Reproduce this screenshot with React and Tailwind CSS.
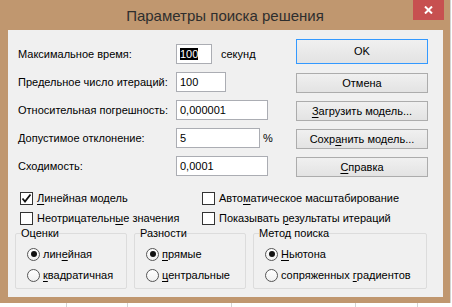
const FONT = "font-['Liberation_Sans',Arial,sans-serif]"

function TextBox({ width, value, selected }) {
  return (
    <div className={`h-[20px] bg-white border border-[#abadb3] flex items-center pl-[3px] ${width}`}>
      {selected ? (
        <span className="bg-black text-white leading-[12px] h-[12px]">{value}</span>
      ) : (
        <span>{value}</span>
      )}
    </div>
  )
}

function Row({ label, children }) {
  return (
    <div className="h-[20px] grid grid-cols-[158px_auto] items-center">
      <span>{label}</span>
      <div className="flex items-center">{children}</div>
    </div>
  )
}

function Button({ children, primary }) {
  return (
    <div
      className={`w-[132px] flex items-center justify-center bg-gradient-to-b from-[#f0f0f0] to-[#e3e3e3] border ${
        primary ? 'h-[25px] border-[#3399ff]' : 'h-[20px] border-[#acacac]'
      }`}
    >
      {children}
    </div>
  )
}

function Checkbox({ checked, children }) {
  return (
    <div className="h-[16px] flex items-center gap-[4px]">
      <div className="w-[13px] h-[13px] border border-[#333] bg-white flex items-center justify-center">
        {checked && (
          <svg width="11" height="11" viewBox="0 0 11 11">
            <path d="M1.5 5.5 L4 8.5 L9.5 1.5" fill="none" stroke="#111" strokeWidth="1.8" />
          </svg>
        )}
      </div>
      <span>{children}</span>
    </div>
  )
}

function Radio({ checked, children }) {
  return (
    <div className="h-[16px] flex items-center gap-[3px]">
      <div className="w-[13px] h-[13px] rounded-full border border-[#555] bg-gradient-to-b from-white to-[#f0f0f0] flex items-center justify-center">
        {checked && <div className="w-[6px] h-[6px] rounded-full bg-[#111]" />}
      </div>
      <span>{children}</span>
    </div>
  )
}

function Group({ title, width, children }) {
  return (
    <fieldset className={`h-[63px] border border-[#dcdcdc] rounded-[2px] pl-[5px] ${width}`}>
      <legend className="leading-[14px] px-0">{title}</legend>
      <div className="pl-[6px] pt-[6px] flex flex-col gap-[5px]">{children}</div>
    </fieldset>
  )
}

export default function App() {
  return (
    <div className={`w-[452px] h-[307px] bg-white flex flex-col text-[11px] text-black whitespace-nowrap ${FONT}`}>
      <div className="flex">
        <div className="w-[450px] h-[303px] bg-[#c0976f] flex flex-col">
          {/* title bar */}
          <div className="h-[30px] grid grid-cols-[37px_1fr_37px]">
            <div />
            <div className="text-center text-[15px] leading-[32px] text-[#2e2e2e]">Параметры поиска решения</div>
            <div>
              <div className="w-[31px] h-[20px] bg-[#c75050] flex items-center justify-center">
                <svg width="9" height="8" viewBox="0 0 9 8">
                  <path d="M1 0.5 L8 7.5 M8 0.5 L1 7.5" stroke="#fff" strokeWidth="2" />
                </svg>
              </div>
            </div>
          </div>

          {/* client area */}
          <div className="pl-[8px]">
            <div className="w-[435px] h-[267px] bg-[#f0f0f0] flex flex-col">
              <div className="flex">
                <div className="w-[288px] pl-[10px] pt-[14px] flex flex-col gap-[8px]">
                  <Row label="Максимальное время:">
                    <TextBox width="w-[36px]" value="100" selected />
                    <span className="ml-[9px]">секунд</span>
                  </Row>
                  <Row label="Предельное число итераций:">
                    <TextBox width="w-[50px]" value="100" />
                  </Row>
                  <Row label="Относительная погрешность:">
                    <TextBox width="w-[92px]" value="0,000001" />
                  </Row>
                  <Row label="Допустимое отклонение:">
                    <TextBox width="w-[84px]" value="5" />
                    <span className="ml-[3px]">%</span>
                  </Row>
                  <Row label="Сходимость:">
                    <TextBox width="w-[92px]" value="0,0001" />
                  </Row>
                </div>
                <div className="pt-[9px] flex flex-col gap-[8px]">
                  <div className="mb-[1px]">
                    <Button primary>OK</Button>
                  </div>
                  <Button>Отмена</Button>
                  <Button>
                    <span><u className="underline-offset-2">З</u>агрузить модель...</span>
                  </Button>
                  <Button>
                    <span>Сохр<u className="underline-offset-2">а</u>нить модель...</span>
                  </Button>
                  <Button>
                    <span><u className="underline-offset-2">С</u>правка</span>
                  </Button>
                </div>
              </div>

              {/* checkboxes */}
              <div className="mt-[13px] pl-[12px] grid grid-cols-[182px_auto] gap-y-[4px]">
                <Checkbox checked>
                  <u className="underline-offset-2">Л</u>инейная модель
                </Checkbox>
                <Checkbox>
                  Авто<u className="underline-offset-2">м</u>атическое масштабирование
                </Checkbox>
                <Checkbox>
                  Неотрицательн<u className="underline-offset-2">ы</u>е значения
                </Checkbox>
                <Checkbox>
                  Показывать <u className="underline-offset-2">р</u>езультаты итераций
                </Checkbox>
              </div>

              {/* group boxes */}
              <div className="pl-[7px] flex gap-[7px]">
                <Group title="Оценки" width="w-[112px]">
                  <Radio checked>
                    лин<u className="underline-offset-2">е</u>йная
                  </Radio>
                  <Radio>
                    <u className="underline-offset-2">к</u>вадратичная
                  </Radio>
                </Group>
                <Group title="Разности" width="w-[112px]">
                  <Radio checked>
                    <u className="underline-offset-2">п</u>рямые
                  </Radio>
                  <Radio>
                    <u className="underline-offset-2">ц</u>ентральные
                  </Radio>
                </Group>
                <Group title="Метод поиска" width="w-[174px]">
                  <Radio checked>
                    <u className="underline-offset-2">Н</u>ьютона
                  </Radio>
                  <Radio>
                    сопряженных <u className="underline-offset-2">г</u>радиентов
                  </Radio>
                </Group>
              </div>
            </div>
          </div>
        </div>
        <div className="w-[2px] h-[303px] border-l border-[#d4d4d4]" />
      </div>

      {/* spreadsheet grid peeking below */}
      <div className="h-[4px] flex">
        <div className="w-[67px] border-r border-[#d4d4d4]" />
        <div className="w-[61px] border-r border-[#d4d4d4]" />
        <div className="w-[104px] border-r border-[#d4d4d4]" />
        <div className="w-[124px] border-r border-[#d4d4d4]" />
        <div className="w-[62px] border-r border-[#d4d4d4]" />
      </div>
    </div>
  )
}
